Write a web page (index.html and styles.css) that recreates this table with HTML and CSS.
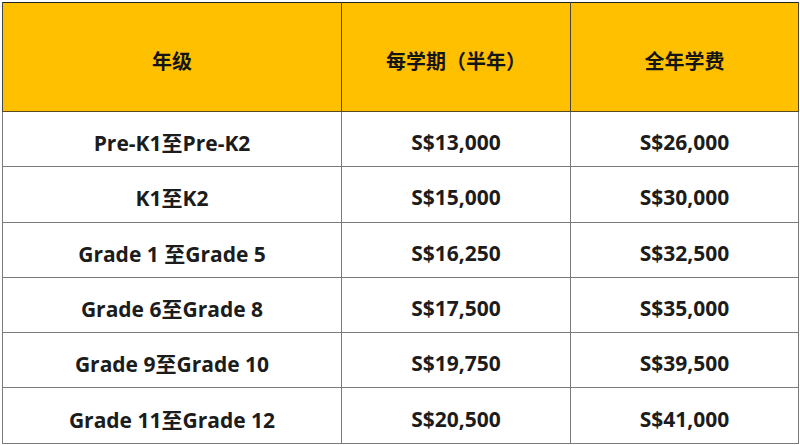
FILE: index.html
```html
<!DOCTYPE html>
<html lang="zh">
<head>
<meta charset="utf-8">
<link rel="stylesheet" href="styles.css">
</head>
<body>
<div class="wrap">
<table class="fees">
  <colgroup>
    <col class="c1"><col class="c2"><col class="c3">
  </colgroup>
  <thead>
    <tr><th>年级</th><th>每学期（半年）</th><th>全年学费</th></tr>
  </thead>
  <tbody>
    <tr><td>Pre-K1至Pre-K2</td><td>S$13,000</td><td>S$26,000</td></tr>
    <tr><td>K1至K2</td><td>S$15,000</td><td>S$30,000</td></tr>
    <tr><td>Grade 1 至Grade 5</td><td>S$16,250</td><td>S$32,500</td></tr>
    <tr><td>Grade 6至Grade 8</td><td>S$17,500</td><td>S$35,000</td></tr>
    <tr><td>Grade 9至Grade 10</td><td>S$19,750</td><td>S$39,500</td></tr>
    <tr><td>Grade 11至Grade 12</td><td>S$20,500</td><td>S$41,000</td></tr>
  </tbody>
</table>
</div>
</body>
</html>
```
FILE: styles.css
```css
html, body {
  margin: 0;
  padding: 0;
  background: #ffffff;
}
.wrap {
  padding: 2px 0 0 2px;
}
.fees {
  border-collapse: collapse;
  width: 796px;
  table-layout: fixed;
  font-family: "Open Sans", "Noto Sans CJK SC", sans-serif;
  font-weight: 700;
  font-size: 21px;
  color: #1c1c1c;
  border: 1.5px solid #222;
}
.c1 { width: 339px; }
.c2 { width: 229px; }
.c3 { width: 228px; }
.fees th {
  background: #ffc000;
  height: 102px;
  border-left: 1px solid #444;
  border-right: 1px solid #444;
  border-bottom: 1.5px solid #5a4a20;
  font-weight: 700;
  font-size: 20px;
  padding: 6px 0 0 0;
  color: #141414;
}
.fees td {
  height: 48.3px;
  padding: 6px 0 0 0;
  text-align: center;
  border: 1px solid #7a7a7a;
}
```
